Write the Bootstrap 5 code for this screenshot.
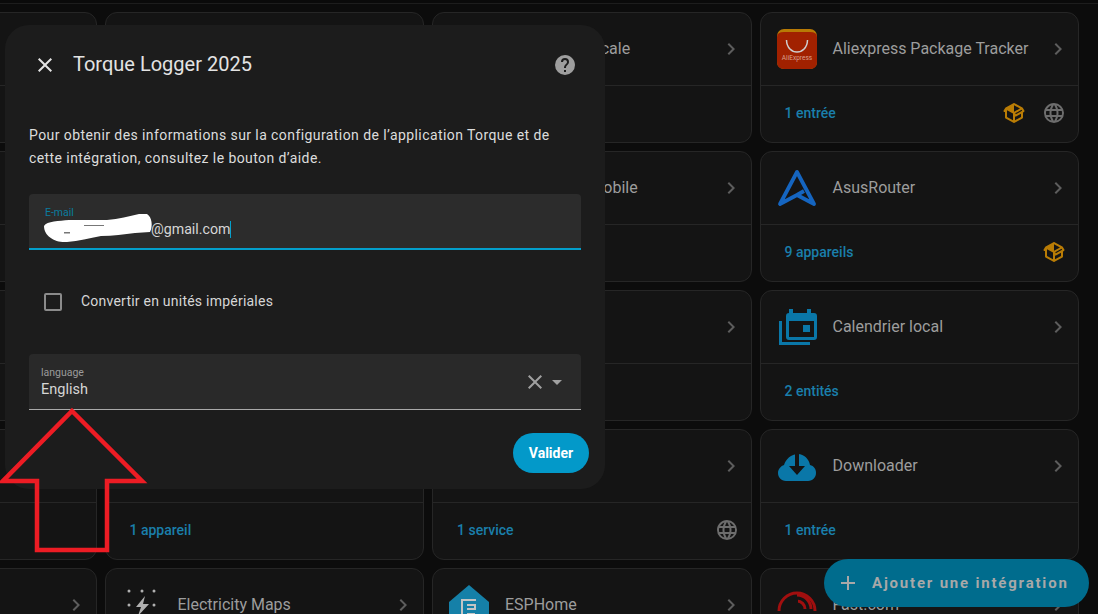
<!DOCTYPE html>
<html lang="fr">
<head>
    <meta charset="UTF-8">
    <meta name="viewport" content="width=device-width, initial-scale=1.0">
    <title>Intégrations</title>
    <link href="https://cdn.jsdelivr.net/npm/bootstrap@5.3.0/dist/css/bootstrap.min.css" rel="stylesheet">
    <style>
        html, body { height: 100%; }
        body { background: #0c0c0c; font-family: Roboto, "Liberation Sans", sans-serif; overflow: hidden; position: relative; }
        .top-rule { height: 4px; border-bottom: 1px solid #1d1d1d; background: #0a0a0a; }
        .hub-grid { display: grid; grid-template-columns: repeat(4, 319.5px); grid-auto-rows: 131px; gap: 8px; margin-left: -223px; padding-top: 8px; }
        .hub-card { background: #141414; border: 1px solid #262626; border-radius: 12px; display: flex; flex-direction: column; }
        .hub-head { height: 73px; padding: 0 8px 0 16px; border-bottom: 1px solid #262626; gap: 16px; }
        .hub-logo { width: 40px; height: 40px; flex: none; }
        .hub-title { font-size: 16px; color: #9d9d9d; white-space: nowrap; flex: 1; }
        .hub-chev { width: 24px; height: 24px; fill: #5d5d5d; flex: none; }
        .hub-foot { flex: 1; padding: 0 12px 2px 24px; }
        .hub-link { font-size: 14px; font-weight: 500; color: #1a7fab; flex: 1; }
        .hub-foot svg { width: 24px; height: 24px; margin-left: 16px; }
        .fill-box { fill: #b97c05; }
        .fill-web { fill: #6d6d6d; }

        .dlg { position: absolute; left: 5px; top: 25px; width: 600px; height: 464px; background: #1c1c1c; border-radius: 24px; padding: 0 24px; }
        .dlg-head { height: 80px; padding: 0 4px; }
        .dlg-head svg { width: 24px; height: 24px; flex: none; }
        .dlg-title { font-size: 20px; color: #e3e3e3; margin-left: 16px; margin-top: -2px; flex: 1; }
        .dlg-text { font-size: 14px; line-height: 23px; color: #dcdcdc; letter-spacing: .42px; margin: 19px 0 24px; }
        .fld { position: relative; background: #2c2c2c; height: 56px; border-radius: 4px 4px 0 0; }
        .fld-mail { border-bottom: 2px solid #039fcb; padding: 13px 16px 0; }
        .fld-mail .fld-label { color: #0a7c9e; }
        .fld-label { font-size: 10.5px; line-height: 12px; color: #9b9b9b; }
        .fld-value { font-size: 14.5px; line-height: 20px; color: #d6d6d6; }
        .mail-value { padding-left: 106px; width: fit-content; border-right: 1px solid #039fcb; line-height: 17px; margin-top: 2px; font-size: 14.2px; }
        .scribble { position: absolute; left: 0; top: 0; width: 200px; height: 55px; }
        .check-row { height: 104px; padding-left: 15px; gap: 19px; }
        .check-box { width: 18px; height: 18px; border: 2px solid #8b8b8b; border-radius: 2px; }
        .check-label { font-size: 14px; color: #d6d6d6; letter-spacing: .23px; margin-top: -2px; }
        .fld-lang { background: #292929; border-bottom: 1px solid #a9a9a9; padding: 13px 12px 0 12px; }
        .fld-lang .fld-value { margin-top: 1px; }
        .lang-tools { position: absolute; right: 13px; top: 16px; }
        .lang-tools svg { fill: #a0a0a0; }
        .lang-x { width: 20px; height: 24px; }
        .lang-down { width: 24px; height: 24px; margin-right: -1px; }
        .dlg-actions { margin-top: 23px; margin-right: -8px; }
        .btn-ok { background: #0399c9; border: 0; border-radius: 20px; color: #fff; font-size: 14px; font-weight: 700; height: 40px; width: 76px; padding: 0; }
        .arrow-mark { position: absolute; left: 0; top: 405px; width: 150px; height: 150px; }
        .btn-add { position: absolute; left: 824px; top: 559px; width: 265px; height: 48px; border-radius: 24px; background: #006c8d; border: 0; color: #a8a8a8; font-size: 15px; font-weight: 700; letter-spacing: 1.8px; padding: 0 0 0 12px; gap: 12px; }
        .btn-add svg { width: 24px; height: 24px; fill: #a8a8a8; }
    </style>
</head>
<body>
    <div class="top-rule"></div>
    <div class="hub-grid" id="hubGrid"></div>

    <!-- Add integration -->
    <button class="btn-add d-flex align-items-center">
        <svg viewBox="0 0 24 24"><path d="M19,13H13V19H11V13H5V11H11V5H13V11H19V13Z"/></svg>
        Ajouter une intégration
    </button>

    <!-- Dialog -->
    <div class="dlg">
        <div class="dlg-head d-flex align-items-center">
            <svg viewBox="0 0 24 24" fill="#e3e3e3"><path d="M19,6.41L17.59,5L12,10.59L6.41,5L5,6.41L10.59,12L5,17.59L6.41,19L12,13.41L17.59,19L19,17.59L13.41,12L19,6.41Z"/></svg>
            <div class="dlg-title">Torque Logger 2025</div>
            <svg viewBox="0 0 24 24" fill="#9e9e9e"><path d="M15.07,11.25L14.17,12.17C13.45,12.89 13,13.5 13,15H11V14.5C11,13.39 11.45,12.39 12.17,11.67L13.41,10.41C13.78,10.05 14,9.55 14,9C14,7.89 13.1,7 12,7A2,2 0 0,0 10,9H8A4,4 0 0,1 12,5A4,4 0 0,1 16,9C16,9.88 15.64,10.67 15.07,11.25M13,19H11V17H13M12,2A10,10 0 0,0 2,12A10,10 0 0,0 12,22A10,10 0 0,0 22,12C22,6.47 17.5,2 12,2Z"/></svg>
        </div>
        <p class="dlg-text">Pour obtenir des informations sur la configuration de l’application Torque et de cette intégration, consultez le bouton d’aide.</p>

        <div class="fld fld-mail">
            <div class="fld-label">E-mail</div>
            <div class="fld-value mail-value">@gmail.com</div>
            <svg class="scribble" viewBox="0 0 200 55"><path fill="#fff" d="M15,32 C18,27 30,27 40,26 L78,26 C90,25 100,22 110,20 L118,20 C123,23 124,32 121,38 L106,39 C95,40 84,42 72,42 C60,44 50,47 38,48 C26,49 15,42 15,32Z"/><path fill="#777" d="M55,31h20v1h-20zM35,38h6v1.500h-6z"/></svg>
        </div>

        <div class="check-row d-flex align-items-center">
            <div class="check-box"></div>
            <div class="check-label">Convertir en unités impériales</div>
        </div>

        <div class="fld fld-lang">
            <div class="fld-label">language</div>
            <div class="fld-value">English</div>
            <div class="lang-tools d-flex align-items-center">
                <svg class="lang-x" viewBox="2 0 20 24"><path d="M19,6.41L17.59,5L12,10.59L6.41,5L5,6.41L10.59,12L5,17.59L6.41,19L12,13.41L17.59,19L19,17.59L13.41,12L19,6.41Z"/></svg>
                <svg class="lang-down" viewBox="0 0 24 24"><path d="M7,10L12,15L17,10H7Z"/></svg>
            </div>
        </div>

        <div class="dlg-actions d-flex justify-content-end">
            <button class="btn-ok">Valider</button>
        </div>
    </div>

    <!-- Red arrow drawn on the screenshot -->
    <svg class="arrow-mark" viewBox="0 405 150 150"><path fill="none" stroke="#ed1c24" stroke-width="4.500" d="M72,411 L142,481 L107,481 L107,550 L37,550 L37,481 L3,481 Z"/></svg>

    <script>
        const chevron = '<svg class="hub-chev" viewBox="0 0 24 24"><path d="M8.59,16.58L13.17,12L8.59,7.41L10,6L16,12L10,18L8.59,16.58Z"/></svg>';
        const box = '<svg class="fill-box" viewBox="0 0 24 24"><path d="M2,10.96C1.5,10.68 1.35,10.07 1.63,9.59L3.13,7C3.24,6.8 3.41,6.66 3.6,6.58L11.43,2.18C11.59,2.06 11.79,2 12,2C12.21,2 12.41,2.06 12.57,2.18L20.47,6.62C20.66,6.72 20.82,6.88 20.91,7.08L22.36,9.6C22.64,10.08 22.47,10.69 22,10.96L21,11.54V16.5C21,16.88 20.79,17.21 20.47,17.38L12.57,21.82C12.41,21.94 12.21,22 12,22C11.79,22 11.59,21.94 11.43,21.82L3.53,17.38C3.21,17.21 3,16.88 3,16.5V10.96C2.7,11.13 2.32,11.14 2,10.96M12,4.15V4.15L12,10.85V10.85L17.96,7.5L12,4.15M5,15.91L11,19.29V12.58L5,9.21V15.91M19,15.91V12.69L14,15.59C13.67,15.77 13.31,15.76 13,15.6V19.29L19,15.91M13.85,13.36L20.13,9.73L19.55,8.72L13.27,12.35L13.85,13.36Z"/></svg>';
        const web = '<svg class="fill-web" viewBox="0 0 24 24"><path d="M16.36,14C16.44,13.34 16.5,12.68 16.5,12C16.5,11.32 16.44,10.66 16.36,10H19.74C19.9,10.64 20,11.31 20,12C20,12.69 19.9,13.36 19.74,14M14.59,19.56C15.19,18.45 15.65,17.25 15.97,16H18.92C17.96,17.65 16.43,18.93 14.59,19.56M14.34,14H9.66C9.56,13.34 9.5,12.68 9.5,12C9.5,11.32 9.56,10.65 9.66,10H14.34C14.43,10.65 14.5,11.32 14.5,12C14.5,12.68 14.43,13.34 14.34,14M12,19.96C11.17,18.76 10.5,17.43 10.09,16H13.91C13.5,17.43 12.83,18.76 12,19.96M8,8H5.08C6.03,6.34 7.57,5.06 9.4,4.44C8.8,5.55 8.35,6.75 8,8M5.08,16H8C8.35,17.25 8.8,18.45 9.4,19.56C7.57,18.93 6.03,17.65 5.08,16M4.26,14C4.1,13.36 4,12.69 4,12C4,11.31 4.1,10.64 4.26,10H7.64C7.56,10.66 7.5,11.32 7.5,12C7.5,12.68 7.56,13.34 7.64,14M12,4.03C12.83,5.23 13.5,6.57 13.91,8H10.09C10.5,6.57 11.17,5.23 12,4.03M18.92,8H15.97C15.65,6.75 15.19,5.55 14.59,4.44C16.43,5.07 17.96,6.34 18.92,8M12,2C6.47,2 2,6.5 2,12A10,10 0 0,0 12,22A10,10 0 0,0 22,12A10,10 0 0,0 12,2Z"/></svg>';

        // logos, all on a 40x40 box
        const logos = {
            ali: '<rect width="40" height="40" rx="7" fill="#b87a05"/><path d="M0,8 Q0,3 7,3 H33 Q40,3 40,8 V33 Q40,40 33,40 H7 Q0,40 0,33Z" fill="#a12100"/><path d="M9.500,11 C10,27 30,27 30.500,11" fill="none" stroke="#cfcfcf" stroke-width="1.500"/><text x="20" y="31" text-anchor="middle" font-size="6.500" fill="#d9a08e" font-family="Roboto, sans-serif">AliExpress</text>',
            asus: '<path d="M20,4 L3,36 L20,27 L37,36 Z M20,27 L27,23" fill="none" stroke="#1565c0" stroke-width="3.800" stroke-linejoin="round"/>',
            cal: '<path fill="#0a77a8" d="M2,14h3v21h28v3H2z"/><path fill="#0a77a8" fill-rule="evenodd" d="M12,2h4v4h14V2h4v4h3a3,3 0 0 1 3,3v21a3,3 0 0 1-3,3H12a3,3 0 0 1-3-3V9a3,3 0 0 1 3-3zM12,14v16h25V14z"/><rect x="26" y="18" width="7" height="7" fill="#0a77a8"/>',
            down: '<path fill="#0a77a8" d="M9,35 C4,35 1,31 1,27 C1,23 4,20 7,19 C9,13 14,8 21,8 C27,8 32,13 33,19 C37,20 39,23 39,27 C39,31 36,35 31,35Z"/><path fill="#141414" d="M18,8h4v12h6l-8,9l-8-9h6z"/>',
            elec: '<g fill="#b0b0b0"><path d="M23,11 L14,22 H19 L16,31 L27,19 H21Z"/><circle cx="7" cy="6" r="1.500"/><circle cx="20" cy="6" r="1.500"/><circle cx="32" cy="6" r="1.500"/><circle cx="7" cy="20" r="1.500"/><circle cx="32" cy="20" r="1.500"/></g>',
            esp: '<path fill="#1580a8" d="M20,0 L40,17 V40 H0 V17Z"/><path fill="none" stroke="#c4c4c4" stroke-width="2" d="M13,40 V15 H27 M18,20 H26 V24 H18 M18,29 H26"/>',
            fast: '<path d="M2,26 A18,18 0 0 1 38,26" fill="none" stroke="#a10f0f" stroke-width="3"/><path d="M20,10 A14,14 0 0 1 34,24 M20,16 A8,8 0 0 1 28,24" fill="none" stroke="#a10f0f" stroke-width="3"/><rect x="19" y="14" width="2" height="14" fill="#141414"/><text x="20" y="39" text-anchor="middle" font-size="12" font-weight="700" fill="#000" font-family="Roboto, sans-serif">FAST</text>'
        };

        const hubs = [
            {}, {}, { name: 'Assistance locale' },
            { name: 'Aliexpress Package Tracker', logo: 'ali', link: '1 entrée', icons: [box, web] },
            { name: 'Apache' }, {}, { name: 'Application mobile' },
            { name: 'AsusRouter', logo: 'asus', link: '9 appareils', icons: [box] },
            {}, {}, {},
            { name: 'Calendrier local', logo: 'cal', link: '2 entités' },
            {}, { link: '1 appareil' }, { link: '1 service', icons: [web] },
            { name: 'Downloader', logo: 'down', link: '1 entrée' },
            {}, { name: 'Electricity Maps', logo: 'elec' }, { name: 'ESPHome', logo: 'esp' },
            { name: 'Fast.com', logo: 'fast' }
        ];

        document.getElementById('hubGrid').innerHTML = hubs.map(hub => `
            <div class="hub-card">
                <div class="hub-head d-flex align-items-center">
                    <svg class="hub-logo" viewBox="0 0 40 40">${logos[hub.logo] || ''}</svg>
                    <div class="hub-title">${hub.name || ''}</div>
                    ${chevron}
                </div>
                <div class="hub-foot d-flex align-items-center">
                    <div class="hub-link">${hub.link || ''}</div>
                    ${(hub.icons || []).join('')}
                </div>
            </div>
        `).join('');
    </script>
    <script src="https://cdn.jsdelivr.net/npm/bootstrap@5.3.0/dist/js/bootstrap.bundle.min.js"></script>
</body>
</html>
